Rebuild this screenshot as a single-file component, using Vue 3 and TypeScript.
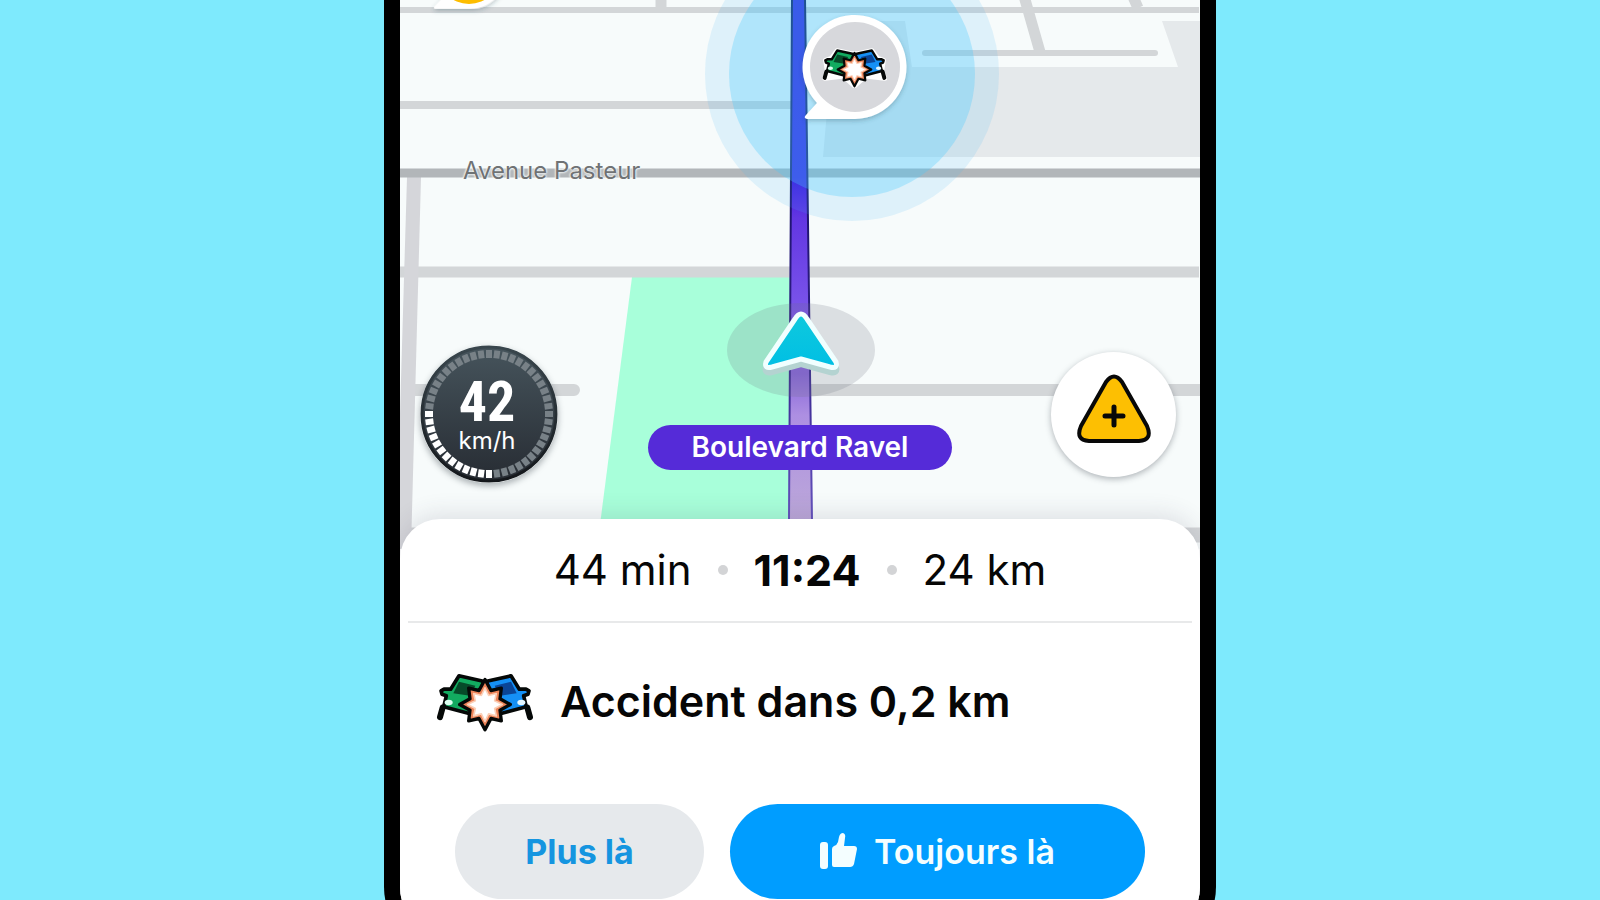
<script setup lang="ts">
interface Tick {
  angle: number
  lit: boolean
}

const speed = 42
const tickCount = 48
const ticks: Tick[] = Array.from({ length: tickCount }, (_, i) => {
  const angle = (i * 360) / tickCount
  return { angle, lit: angle >= 180 && angle <= 274 }
})

const trip = { duration: '44 min', arrival: '11:24', distance: '24 km' }
</script>

<template>
  <div class="page">
    <svg class="defs" width="0" height="0" aria-hidden="true">
      <defs>
        <symbol id="crash" viewBox="34 34 294 182">
          <g fill="#fff" stroke="#fff" stroke-width="22" stroke-linejoin="round" stroke-linecap="round">
            <path d="M102 49 166 62 196 62 260 49 286 84 312 92 304 140 318 174 230 164 181 208 132 164 46 174 58 140 50 92 76 84Z" />
          </g>
          <g stroke="#050807" stroke-width="11" stroke-linejoin="round" stroke-linecap="round">
            <path d="M54 143 46 172" stroke-width="18" />
            <path d="M103 48 176 64 156 167 57 141 65 108 52 103 49 93 58 88 78 88Z" fill="#12ab60" />
            <path d="M308 143 316 172" stroke-width="18" />
            <path d="M259 48 186 64 206 167 305 141 297 108 310 103 313 93 304 88 284 88Z" fill="#1590f5" />
          </g>
          <path d="M103 66 152 78 136 108 86 100Z" fill="#064a29" />
          <path d="M259 66 210 78 226 108 276 100Z" fill="#0b4596" />
          <ellipse cx="72" cy="128" rx="12" ry="8" fill="#dcfff0" />
          <ellipse cx="290" cy="128" rx="12" ry="8" fill="#e3f6ff" />
          <path
            d="M181 59 199 92 230 85 226 117 257 134 226 151 230 183 199 176 181 210 163 176 132 183 136 151 105 134 136 117 132 85 163 92Z"
            fill="#ec8358" stroke="#050807" stroke-width="10" stroke-linejoin="round"
          />
          <path
            d="M181 84 192 107 215 101 210 123 233 134 210 146 215 168 192 162 181 185 170 162 147 168 152 146 129 134 152 123 147 101 170 107Z"
            fill="#fff" stroke="#fbd0b8" stroke-width="5" stroke-linejoin="round"
          />
        </symbol>
        <symbol id="pin" viewBox="-54 -54 108 110" overflow="visible">
          <path d="M0 52H-48Q-52 51-49 48L-38 36A52 52 0 1 1 0 52Z" fill="#fff" />
        </symbol>
      </defs>
    </svg>

    <main class="phone">
      <section class="map" aria-label="Carte">
        <svg class="map-art" viewBox="400 0 800 549" preserveAspectRatio="xMidYMin slice" aria-hidden="true">
          <defs>
            <linearGradient id="route" gradientUnits="userSpaceOnUse" x1="0" y1="0" x2="0" y2="519">
              <stop offset="0" stop-color="#3214dc" />
              <stop offset="0.34" stop-color="#3a18e0" />
              <stop offset="0.42" stop-color="#6236e2" />
              <stop offset="0.6" stop-color="#7b55ea" />
              <stop offset="0.72" stop-color="#8765da" />
              <stop offset="0.8" stop-color="#ad8fe2" />
              <stop offset="1" stop-color="#bca8d9" />
            </linearGradient>
            <linearGradient id="routeEdge" gradientUnits="userSpaceOnUse" x1="0" y1="0" x2="0" y2="519">
              <stop offset="0" stop-color="#05064a" />
              <stop offset="0.65" stop-color="#2f1d86" />
              <stop offset="1" stop-color="#6553bd" />
            </linearGradient>
            <linearGradient id="arrow" x1="0" y1="0" x2="0" y2="1">
              <stop offset="0" stop-color="#0fc9dd" />
              <stop offset="1" stop-color="#00bfe4" />
            </linearGradient>
            <filter id="soft" x="-20%" y="-20%" width="140%" height="150%">
              <feDropShadow dx="0" dy="2" stdDeviation="2" flood-color="#33505c" flood-opacity="0.3" />
            </filter>
          </defs>

          <rect x="400" width="800" height="549" fill="#f7fbfb" />
          <path d="M823 157H1200V21H1162L1178 67H912L905 21H835Z" fill="#e5e9eb" />
          <path d="M632 277H800V540H598Z" fill="#a8ffda" />

          <g fill="none" stroke="#d3d6d8">
            <path d="M400 10H1199" stroke-width="6" />
            <path d="M661 0V8" stroke-width="11" />
            <path d="M400 105H795" stroke-width="8" />
            <path d="M1024 -4 1040 52M1131 -8 1138 8" stroke-width="11" />
            <path d="M925 53H1155" stroke-width="6" stroke-linecap="round" />
            <path d="M414 390H574M800 390H1199" stroke-width="12" stroke-linecap="round" />
            <path d="M400 272H1199" stroke-width="11" />
            <path d="M400 535H1200" stroke-width="15" />
          </g>
          <path d="M407 177H421L411 549H396Z" fill="#d5d6da" />
          <path d="M400 173H1200" stroke="#b2b6b9" stroke-width="9" />

          <path d="M792 -2H805L812 521H789Z" fill="url(#route)" stroke="url(#routeEdge)" stroke-width="2" />

          <circle cx="852" cy="74" r="147" fill="#44bbfb" fill-opacity="0.14" />
          <circle cx="852" cy="74" r="123" fill="#45caff" fill-opacity="0.3" />

          <ellipse cx="801" cy="350" rx="74" ry="47" fill="#6d7480" fill-opacity="0.2" />
          <path
            d="M795 320Q801 310 807 320L836 362Q838 369 830 367L801 359 772 367Q764 369 766 362Z"
            transform="translate(0 5)" fill="#b4d3d1" stroke="#b4d3d1" stroke-width="6" stroke-linejoin="round"
          />
          <path
            d="M795 319Q801 309 807 319L836 362Q838 369 830 367L801 359 772 367Q764 369 766 362Z"
            fill="url(#arrow)" stroke="#f1ffff" stroke-width="5" stroke-linejoin="round"
          />

          <g filter="url(#soft)">
            <use href="#pin" x="801" y="13" width="108" height="110" />
            <use href="#pin" x="431" y="-67" width="78" height="79" />
          </g>
          <circle cx="855" cy="67" r="45" fill="#d7d8dc" />
          <use href="#crash" x="822" y="47" width="65" height="41" />
          <circle cx="469" cy="-28" r="32" fill="#fdbd00" />
        </svg>

        <span class="street">Avenue Pasteur</span>
        <span class="road">Boulevard Ravel</span>

        <div class="speed">
          <svg class="dial" viewBox="-69 -69 138 138" aria-hidden="true">
            <defs>
              <linearGradient id="dial" x1="0" y1="0" x2="0" y2="1">
                <stop offset="0" stop-color="#46545c" />
                <stop offset="1" stop-color="#272c33" />
              </linearGradient>
              <linearGradient id="rim" x1="0" y1="0" x2="0" y2="1">
                <stop offset="0" stop-color="#39464d" />
                <stop offset="1" stop-color="#14171b" />
              </linearGradient>
            </defs>
            <circle r="67" fill="url(#dial)" stroke="url(#rim)" stroke-width="3" />
            <rect
              v-for="tick in ticks"
              :key="tick.angle"
              x="-3" y="-64" width="6" height="8"
              :fill="tick.lit ? '#fff' : '#788187'"
              :transform="`rotate(${tick.angle})`"
            />
          </svg>
          <strong class="speed-value">{{ speed }}</strong>
          <span class="speed-unit">km/h</span>
        </div>

        <button class="report" type="button" aria-label="Signaler">
          <svg viewBox="0 0 74 70" width="74" height="70" aria-hidden="true">
            <path
              d="M29 8Q37-3 45 8L70 52Q76 66 62 67H12Q-2 66 4 52Z"
              fill="#fdbf02" stroke="#080808" stroke-width="4" stroke-linejoin="round"
            />
            <path d="M37 33V51M28 42H46" fill="none" stroke="#080808" stroke-width="5" stroke-linecap="round" />
          </svg>
        </button>
      </section>

      <section class="sheet">
        <div class="trip">
          <span>{{ trip.duration }}</span>
          <i class="dot"></i>
          <strong>{{ trip.arrival }}</strong>
          <i class="dot"></i>
          <span>{{ trip.distance }}</span>
        </div>

        <div class="alert">
          <svg class="alert-icon" width="98" height="61" aria-hidden="true"><use href="#crash" /></svg>
          <h1>Accident dans 0,2 km</h1>
        </div>

        <div class="actions">
          <button class="action gone" type="button">Plus là</button>
          <button class="action still" type="button">
            <svg viewBox="0 0 38 37" width="38" height="37" aria-hidden="true">
              <rect y="9" width="8" height="27" rx="3" fill="currentColor" />
              <path
                d="M12 16Q12 14 14 13 17 12 18 9L19 4Q20 0 23 0 26 1 25 5L24 13H34Q37 13 37 16L34 31Q33 34 30 34H14Q12 34 12 32Z"
                fill="currentColor"
              />
            </svg>
            Toujours là
          </button>
        </div>
      </section>
    </main>
  </div>
</template>

<style>
body {
  margin: 0;
}
</style>

<style scoped>
.page {
  height: 100vh;
  overflow: hidden;
  display: flex;
  justify-content: center;
  align-items: flex-start;
  background: #7eeafd;
  font-family: Inter, "Liberation Sans", sans-serif;
  color: #060606;
}

.defs {
  position: absolute;
}

.phone {
  box-sizing: border-box;
  width: 52%;
  flex: none;
  border: 16px solid #000;
  border-top: 0;
  border-radius: 0 0 64px 64px;
  background: #fff;
  overflow: hidden;
}

.map {
  position: relative;
  height: 549px;
  overflow: hidden;
}

.map-art {
  display: block;
  width: 100%;
  height: 100%;
}

.street,
.road,
.speed,
.report {
  position: absolute;
}

.street {
  left: 63px;
  top: 155px;
  font-size: 24px;
  line-height: 32px;
  color: #6f7274;
  text-shadow: 0 0 2px #f7fbfb, 0 0 2px #f7fbfb, 0 0 3px #f7fbfb;
}

.road {
  left: 50%;
  top: 425px;
  transform: translateX(-50%);
  box-sizing: border-box;
  width: 304px;
  border-radius: 23px;
  background: #552bd8;
  color: #fff;
  font-size: 28px;
  font-weight: 600;
  line-height: 45px;
  text-align: center;
  white-space: nowrap;
}

.speed {
  left: 20px;
  top: 345px;
  width: 138px;
  height: 138px;
  display: flex;
  flex-direction: column;
  align-items: center;
  box-sizing: border-box;
  padding-top: 30px;
  padding-right: 4px;
  border-radius: 50%;
  box-shadow: 0 3px 6px rgba(30, 40, 50, 0.35);
  color: #fff;
}

.dial {
  position: absolute;
  inset: 0;
}

.speed-value {
  position: relative;
  font-family: "Liberation Sans Narrow", "Roboto Condensed", "DejaVu Sans Condensed", sans-serif;
  font-size: 56px;
  font-weight: 700;
  line-height: 54px;
}

.speed-unit {
  position: relative;
  font-size: 24px;
  line-height: 24px;
}

.report {
  right: 24px;
  top: 352px;
  width: 125px;
  height: 125px;
  display: flex;
  justify-content: center;
  align-items: center;
  padding: 0 0 12px;
  border: 0;
  border-radius: 50%;
  background: #fff;
  box-shadow: 0 2px 6px rgba(40, 50, 60, 0.35);
}

.sheet {
  position: relative;
  margin-top: -30px;
  padding-bottom: 36px;
  border-radius: 40px 40px 0 0;
  background: #fff;
  box-shadow: 0 -4px 24px rgba(60, 50, 80, 0.14);
}

.trip {
  display: flex;
  justify-content: center;
  align-items: center;
  gap: 26px;
  height: 102px;
  margin: 0 8px;
  border-bottom: 2px solid #e8e9ea;
  font-size: 42px;
  line-height: 48px;
}

.trip strong {
  font-size: 43px;
  font-weight: 700;
}

.dot {
  width: 10px;
  height: 10px;
  border-radius: 50%;
  background: #d3d4d6;
}

.alert {
  display: flex;
  align-items: center;
  gap: 26px;
  height: 156px;
  padding-left: 36px;
}

.alert h1 {
  margin: 0;
  font-size: 43px;
  font-weight: 600;
  white-space: nowrap;
}

.actions {
  display: grid;
  grid-template-columns: 3fr 5fr;
  gap: 26px;
  padding: 25px 55px 0;
}

.action {
  display: flex;
  justify-content: center;
  align-items: center;
  gap: 16px;
  height: 95px;
  padding: 0;
  border: 0;
  border-radius: 48px;
  font-family: inherit;
  font-size: 34px;
  font-weight: 700;
  white-space: nowrap;
}

.gone {
  background: #e6e9ec;
  color: #1595e0;
}

.still {
  background: #009dff;
  color: #f4feff;
  font-weight: 600;
}
</style>
